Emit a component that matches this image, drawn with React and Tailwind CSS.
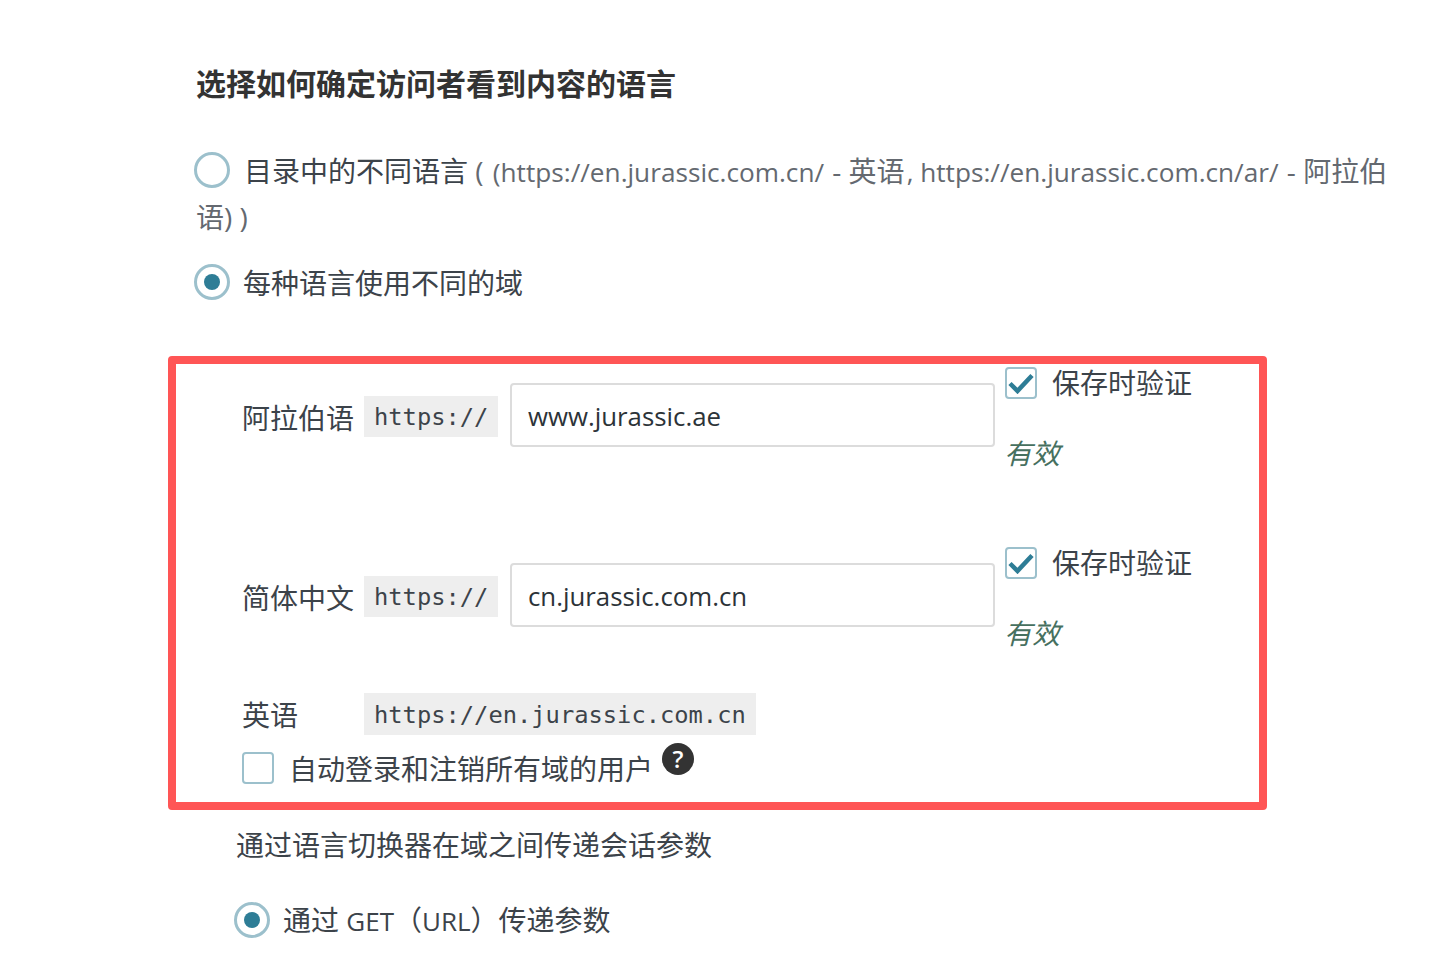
import React from "react";

const sans = "font-['Open_Sans','Noto_Sans_CJK_SC',sans-serif]";
const mono = "font-['DejaVu_Sans_Mono','Noto_Sans_CJK_SC',monospace]";

function Radio({ on, cls = "" }) {
  return (
    <span className={`inline-flex items-center justify-center w-9 h-9 shrink-0 rounded-full border-[3px] border-[#9cc0cc] bg-white align-middle ${cls}`}>
      {on && <span className="w-4 h-4 rounded-full bg-[#2e7d96]" />}
    </span>
  );
}

function Check({ on, cls = "" }) {
  return (
    <span className={`flex items-center justify-center w-8 h-8 shrink-0 rounded-[4px] border-[2px] border-[#9cc0cc] bg-white ${cls}`}>
      {on && (
        <svg width="26" height="22" viewBox="0 0 26 22" fill="none">
          <path d="M2 11.5 L9.5 19 L24 3.5" stroke="#2e7d96" strokeWidth="4.5" />
        </svg>
      )}
    </span>
  );
}

function DomainRow({ label, value, h }) {
  return (
    <div className={`flex items-start ${h}`}>
      <span className="w-[122px] mt-[34px] leading-10">{label}</span>
      <code className={`${mono} w-[134px] mt-[32px] h-[41px] bg-[#eeeeee] px-[10px] text-[23.75px] leading-[43px] text-[#3c434a]`}>https://</code>
      <input
        readOnly
        value={value}
        className={`${sans} ml-3 mt-[19px] w-[485px] h-16 rounded-[4px] border-2 border-[#dcdcdc] bg-white pl-4 pt-[2px] text-[25.8px] text-[#2c3338] outline-none`}
      />
      <div className="ml-[10px] mt-[3px]">
        <label className="flex items-center gap-[15px] h-8">
          <Check on />
          <span className="leading-10">保存时验证</span>
        </label>
        <p className="mt-[34px] -ml-[1px] leading-10 italic text-[#46705f]">有效</p>
      </div>
    </div>
  );
}

export default function App() {
  return (
    <div className={`${sans} min-h-[962px] bg-white pl-[168px] pt-[64px] text-[28px] text-[#3c434a] overflow-hidden`}>
      <h2 className="pl-7 text-[30px] leading-10 font-bold text-[#333333]">选择如何确定访问者看到内容的语言</h2>

      <p className="mt-[44px] ml-7 w-[1200px] leading-[46px] text-[#646970]">
        <Radio cls="-ml-[2px] mr-[14px] -mt-[10px]" />
        <span className="text-[#3c434a]">目录中的不同语言</span> ( <span className="ml-[2px] mr-[1px] text-[26.2px] leading-none">(https://en.jurassic.com.cn/</span> - 英语<span className="mr-[1px] pl-[2px] text-[26.2px] leading-none">, https://en.jurassic.com.cn/ar/</span> - 阿拉伯语) )
      </p>

      <div className="mt-[24px] ml-7 flex items-center h-[36px]">
        <Radio on cls="-ml-[2px] mr-[13px]" />
        <span className="leading-10 mt-[1px]">每种语言使用不同的域</span>
      </div>

      <div className="mt-[56px] w-[1099px] rounded-[4px] border-8 border-[#ff5555] pl-[66px]">
        <DomainRow label="阿拉伯语" value="www.jurassic.ae" h="h-[180px]" />
        <DomainRow label="简体中文" value="cn.jurassic.com.cn" h="h-[149px]" />

        <div className="flex items-start">
          <span className="w-[122px] leading-10 mt-[2px]">英语</span>
          <code className={`${mono} h-[42px] bg-[#eeeeee] px-[10px] text-[23.75px] leading-[44px] text-[#3c434a]`}>https://en.jurassic.com.cn</code>
        </div>

        <div className="mt-[9px] pb-[13px] flex items-start">
          <Check cls="mt-2" />
          <span className="ml-[15px] mt-[5px] leading-10">自动登录和注销所有域的用户</span>
          <span className="ml-[9px] -mt-[1px] flex items-center justify-center w-8 h-8 rounded-full bg-[#333333] text-white text-[24px] font-semibold leading-none">?</span>
        </div>
      </div>

      <p className="ml-[68px] mt-[15px] leading-10">通过语言切换器在域之间传递会话参数</p>

      <div className="ml-[66px] mt-[35px] flex items-center">
        <Radio on cls="mr-[13px]" />
        <span className="leading-10">通过 <span className="text-[26px] leading-none">GET</span>（<span className="text-[26px] leading-none">URL</span>）传递参数</span>
      </div>
    </div>
  );
}
